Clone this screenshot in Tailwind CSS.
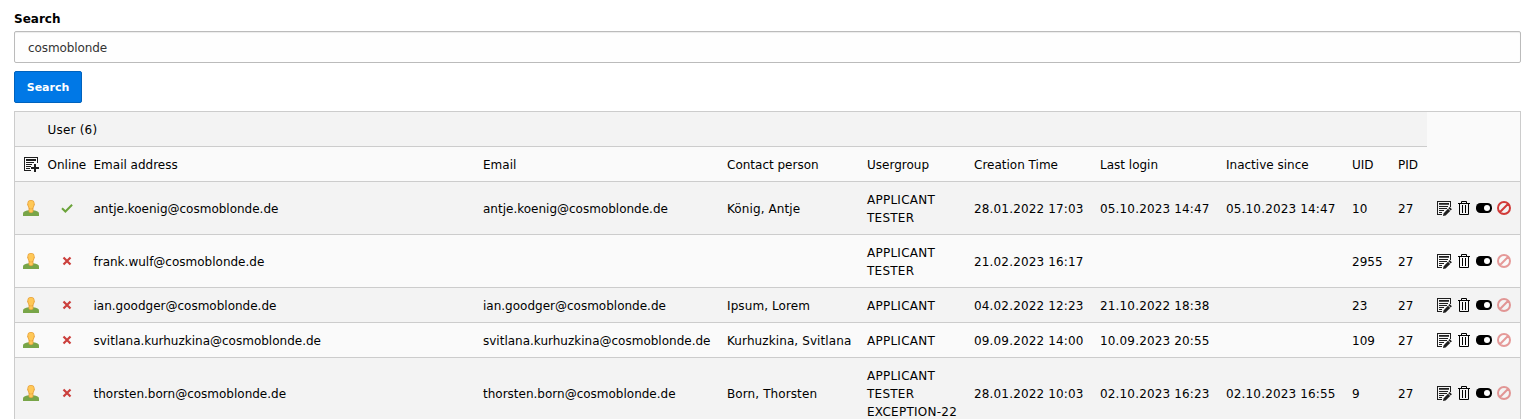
<!DOCTYPE html>
<html lang="en">
<head>
<meta charset="utf-8">
<title>User search</title>
<script src="https://cdn.jsdelivr.net/npm/@tailwindcss/browser@4"></script>
</head>
<body class="h-[419px] overflow-hidden bg-white font-['Verdana','DejaVu_Sans',sans-serif] text-[12px] leading-[18px] text-black">
<svg class="hidden">
  <symbol id="user" viewBox="0 0 16 16">
    <path fill="#78a548" d="M0 16v-2.600C0 11.600 2 11 5.600 10.200h4.800C14 11 16 11.600 16 13.400V16z"/>
    <path fill="#e8a33d" d="M5.600 8h4.800v3.200c0 1-1 1.700-2.400 1.700s-2.400-.7-2.400-1.700z"/>
    <path fill="#e8a33d" d="M8 0C5.400 0 4.400 1.500 4.500 3.500c-.6 0-.5 1.900.2 2.200C5.100 7.800 6.400 9.500 8 9.500s2.900-1.700 3.300-3.800c.7-.3.8-2.200.2-2.200C11.600 1.500 10.600 0 8 0z"/>
    <path fill="#ffc857" d="M8 .7c-2.100 0-2.900 1.200-2.800 3C5.300 6.500 6.500 8.800 8 8.800s2.700-2.300 2.800-5.100c.1-1.800-.7-3-2.800-3zM6.400 9.300h3.200v2.100c0 .5-.7.800-1.600.8s-1.600-.3-1.600-.8z"/>
  </symbol>
  <symbol id="check" viewBox="0 0 16 16"><path fill="none" stroke="#6ba33a" stroke-width="2" d="m3 8.200 3.400 3.300 6.700-6.700"/></symbol>
  <symbol id="cross" viewBox="0 0 16 16"><path fill="none" stroke="#cb3f3c" stroke-width="2.200" d="m4.500 4.500 7 7m0-7-7 7"/></symbol>
  <symbol id="add" viewBox="0 0 16 16">
    <path fill="#1e1e1e" d="M1 1h14v6h-1V2H2v12h6v1H1z"/>
    <path fill="#1e1e1e" d="M3 3h10v2H3zM3 6h8v1H3zM3 8h6v1H3zM3 10h5v1H3zM3 12h4v1H3zM11 8h2v3h3v2h-3v3h-2v-3H8v-2h3z"/>
  </symbol>
  <symbol id="edit" viewBox="0 0 16 16">
    <path fill="#1e1e1e" d="M1 1h14v6h-1V2H2v12h4v1H1z"/>
    <path fill="#1e1e1e" d="M3 3h10v1.700H3zM3 6h9v1H3zM3 8h8v1H3zM3 10h5v1H3zM3 12h3v1H3z"/>
    <path fill="#1e1e1e" d="m13.700 7 2.200 2.200-1.300 1.300-2.200-2.200zM12 8.800l2.200 2.200-4.600 4.500L7 16l.5-2.600z"/>
  </symbol>
  <symbol id="trash" viewBox="0 0 16 16">
    <path fill="none" stroke="#000" d="M2 3.500h12M5.500 3.500v-2h5v2M3.500 3.500v11h9v-11M6.500 5v8M9.500 5v8"/>
  </symbol>
  <symbol id="toggle" viewBox="0 0 16 16"><rect y="3" width="16" height="10" rx="4.500" fill="#000"/><circle cx="11" cy="8" r="3" fill="#fff"/></symbol>
  <symbol id="ban" viewBox="0 0 16 16"><path fill="none" stroke="#d13a38" stroke-width="2" d="M14 8A6 6 0 1 1 2 8a6 6 0 0 1 12 0zM3.800 12.200l8.400-8.400"/></symbol>
</svg>
<main class="pt-2.5 pr-3 pl-3.5">
  <label for="q" class="block h-[21px] font-bold">Search</label>
  <input id="q" value="cosmoblonde" class="block h-8 w-full rounded-[2px] border border-[#bbb] bg-[#fefefe] pt-0.5 pr-3 pl-[13px] tracking-[-0.1px] text-[#333] shadow-[inset_0_1px_1px_rgba(0,0,0,0.075)] outline-none">
  <button class="mt-2 block h-8 w-[68px] rounded-[2px] border border-[#0062bd] bg-[#0078e6] pt-px text-[11px] font-bold text-white">Search</button>
  <div class="mt-2 border border-b-0 border-[#ccc]">
    <table class="w-full table-fixed border-separate border-spacing-0 whitespace-nowrap text-left [&_td]:border-b [&_td]:border-[#ccc] [&_td]:pt-[9px] [&_td]:pb-[7px] [&_td]:align-middle [&_svg]:size-4 [&_svg]:-mt-0.5">
      <colgroup><col class="w-[32.500px]"><col class="w-[46px]"><col class="w-[389.500px]"><col class="w-[244px]"><col class="w-[140px]"><col class="w-[107px]"><col class="w-[126px]"><col class="w-[126px]"><col class="w-[126px]"><col class="w-[46px]"><col class="w-[29px]"><col></colgroup>
      <tbody id="rows">
        <tr class="bg-[#f3f3f3]"><td></td><td colspan="10" class="tracking-[0.2px]">User (6)</td><td rowspan="2" class="bg-[#fafafa]"></td></tr>
        <tr class="bg-[#fafafa]"><td class="pl-2"><svg class="block"><use href="#add"/></svg></td><td>Online</td><td>Email address</td><td>Email</td><td>Contact person</td><td>Usergroup</td><td>Creation Time</td><td>Last login</td><td>Inactive since</td><td>UID</td><td>PID</td></tr>
      </tbody>
    </table>
  </div>
</main>
<script>
const users = [
  ['antje.koenig@cosmoblonde.de', 'antje.koenig@cosmoblonde.de', 'König, Antje', 'APPLICANT<br>TESTER', '28.01.2022 17:03', '05.10.2023 14:47', '05.10.2023 14:47', '10'],
  ['frank.wulf@cosmoblonde.de', '', '', 'APPLICANT<br>TESTER', '21.02.2023 16:17', '', '', '2955'],
  ['ian.goodger@cosmoblonde.de', 'ian.goodger@cosmoblonde.de', 'Ipsum, Lorem', 'APPLICANT', '04.02.2022 12:23', '21.10.2022 18:38', '', '23'],
  ['svitlana.kurhuzkina@cosmoblonde.de', 'svitlana.kurhuzkina@cosmoblonde.de', 'Kurhuzkina, Svitlana', 'APPLICANT', '09.09.2022 14:00', '10.09.2023 20:55', '', '109'],
  ['thorsten.born@cosmoblonde.de', 'thorsten.born@cosmoblonde.de', 'Born, Thorsten', 'APPLICANT<br>TESTER<br>EXCEPTION-22', '28.01.2022 10:03', '02.10.2023 16:23', '02.10.2023 16:55', '9'],
];
const cellClass = ['', '', 'tracking-[0.1px]', 'tracking-[0.25px]', 'tracking-[0.16px]', 'tracking-[0.16px]', 'tracking-[0.16px]', ''];
document.getElementById('rows').insertAdjacentHTML('beforeend', users.map((u, i) => `
<tr class="${i % 2 ? 'bg-[#fafafa]' : 'bg-[#f3f3f3]'}">
<td class="pl-2"><svg class="block"><use href="#user"/></svg></td>
<td class="pl-[11.500px]"><svg class="block"><use href="#${i ? 'cross' : 'check'}"/></svg></td>
${u.map((c, k) => `<td class="${cellClass[k]}">${c}</td>`).join('')}<td>27</td>
<td class="pl-[9px]"><div class="flex gap-1"><svg><use href="#edit"/></svg><svg><use href="#trash"/></svg><svg><use href="#toggle"/></svg><svg class="${i ? 'opacity-50' : 'opacity-100'}"><use href="#ban"/></svg></div></td>
</tr>`).join(''));
</script>
</body>
</html>
